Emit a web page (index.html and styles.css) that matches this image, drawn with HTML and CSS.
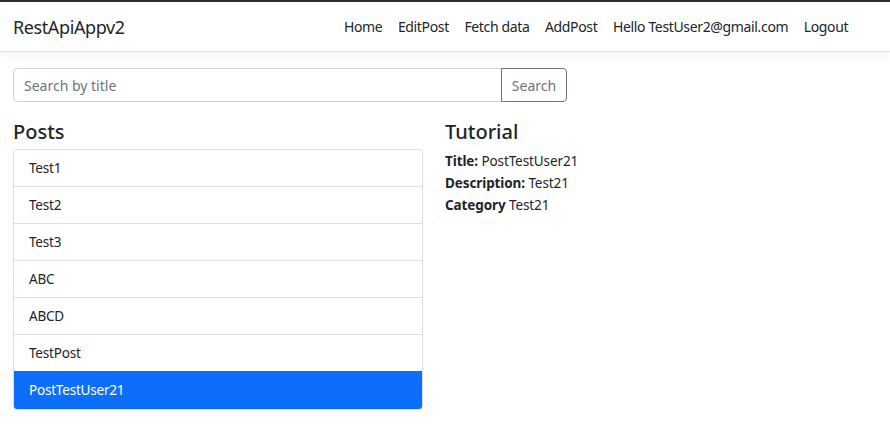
FILE: index.html
```html
<!DOCTYPE html>
<html>
<head>
<meta charset="utf-8">
<link rel="stylesheet" href="styles.css">
</head>
<body>
<header class="navbar">
  <a class="brand">RestApiAppv2</a>
  <ul class="nav">
    <li><a>Home</a></li>
    <li><a>EditPost</a></li>
    <li><a>Fetch data</a></li>
    <li><a>AddPost</a></li>
    <li><a>Hello TestUser2@gmail.com</a></li>
    <li><a>Logout</a></li>
  </ul>
</header>
<main class="main">
  <div class="search">
    <input class="search-input" type="text" placeholder="Search by title">
    <button class="search-btn">Search</button>
  </div>
  <div class="cols">
    <section class="col-left">
      <h4 class="heading">Posts</h4>
      <ul class="list">
        <li class="item">Test1</li>
        <li class="item">Test2</li>
        <li class="item">Test3</li>
        <li class="item">ABC</li>
        <li class="item">ABCD</li>
        <li class="item">TestPost</li>
        <li class="item active">PostTestUser21</li>
      </ul>
    </section>
    <section class="col-right">
      <h4 class="heading heading-detail">Tutorial</h4>
      <div class="detail"><b>Title:</b> PostTestUser21</div>
      <div class="detail"><b>Description:</b> Test21</div>
      <div class="detail"><b>Category</b> Test21</div>
    </section>
  </div>
</main>
</body>
</html>
```
FILE: styles.css
```css
* { box-sizing: border-box; }
html, body { margin: 0; padding: 0; }
body {
  font-family: "Noto Sans", "Open Sans", sans-serif;
  color: #212529;
  background: #fff;
  border-top: 2px solid #2b2a33;
}
.navbar {
  height: 50px;
  display: flex;
  align-items: center;
  padding: 0 34px 0 13px;
  border-bottom: 1px solid #dee2e6;
  box-shadow: 0 4px 12px rgba(0,0,0,.05);
}
.brand {
  font-size: 18px;
  letter-spacing: -0.4px;
  color: #212529;
}
.nav {
  list-style: none;
  margin: 0 0 0 auto;
  padding: 0;
  display: flex;
}
.nav a {
  display: block;
  padding: 0 7.75px;
  font-size: 14px;
  letter-spacing: -0.35px;
  color: #212529;
}
.main {
  padding: 16px 13px 0 13px;
}
.search {
  display: flex;
  width: 554px;
  height: 34px;
}
.search-input {
  flex: 1;
  border: 1px solid #ced4da;
  border-radius: 4px 0 0 4px;
  padding: 0 10px;
  font-family: inherit;
  font-size: 14px;
  color: #212529;
  outline: none;
}
.search-input::placeholder { color: #6c757d; }
.search-btn {
  width: 66px;
  margin-left: -1px;
  border: 1px solid #6c757d;
  border-radius: 0 4px 4px 0;
  background: #fff;
  color: #6c757d;
  font-family: inherit;
  font-size: 14px;
  padding: 0;
}
.cols {
  display: flex;
  margin-top: 15px;
}
.col-left { width: 410px; }
.col-right { margin-left: 22px; }
.heading {
  margin: 0 0 3px 0;
  font-size: 20px;
  font-weight: 500;
  line-height: 29px;
}
.heading-detail { margin-bottom: 4px; }
.list {
  list-style: none;
  margin: 0;
  padding: 0;
  border: 1px solid #dfdfdf;
  border-radius: 4px;
  overflow: hidden;
}
.item {
  height: 37px;
  line-height: 36px;
  padding: 0 15px;
  font-size: 13.5px;
  letter-spacing: -0.2px;
  border-top: 1px solid #dfdfdf;
}
.item:first-child { border-top: 0; height: 36px; }
.item.active {
  height: 39px;
  background: #0d6efd;
  color: #fff;
  border-top-color: #0d6efd;
  margin: 0 -1px -1px -1px;
  padding: 0 16px;
}
.detail {
  font-size: 13.5px;
  letter-spacing: -0.1px;
  line-height: 22px;
}
.detail b { font-weight: 700; }
```
